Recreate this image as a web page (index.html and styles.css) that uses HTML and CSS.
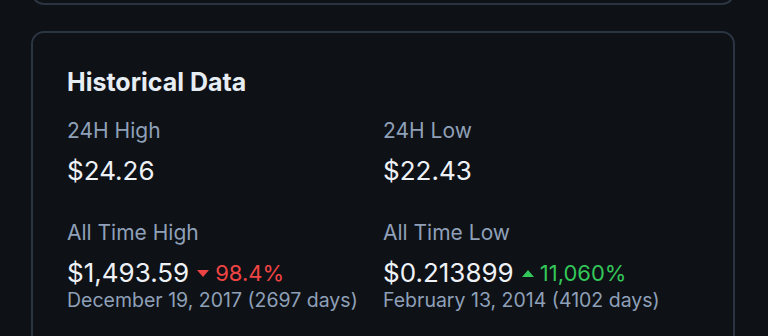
FILE: index.html
```html
<!DOCTYPE html>
<html lang="en">
<head>
    <meta charset="UTF-8">
    <meta name="viewport" content="width=device-width, initial-scale=1.0">
    <title>Historical Data</title>
    <link rel="stylesheet" href="styles.css">
</head>
<body>
    <div class="card card-prev"></div>

    <div class="card">
        <h2>Historical Data</h2>
        <div class="stats">
            <div class="stat">
                <p class="label">24H High</p>
                <p class="value">$24.26</p>
            </div>
            <div class="stat">
                <p class="label">24H Low</p>
                <p class="value">$22.43</p>
            </div>
            <div class="stat">
                <p class="label">All Time High</p>
                <p class="value">$1,493.59 <span class="change down"><span class="tri"></span>98.4%</span></p>
                <p class="date">December 19, 2017 (2697 days)</p>
            </div>
            <div class="stat">
                <p class="label">All Time Low</p>
                <p class="value">$0.213899 <span class="change up"><span class="tri"></span>11,060%</span></p>
                <p class="date">February 13, 2014 (4102 days)</p>
            </div>
        </div>
    </div>
</body>
</html>
```

FILE: styles.css
```css
/* Reset */
* {
    box-sizing: border-box;
    margin: 0;
    padding: 0;
    font-family: 'Inter', 'Noto Sans', sans-serif;
}

body {
    background-color: #0e1116;
    color: #e6edf3;
    display: flow-root;
    padding: 0 33px 0 31px;
    overflow: hidden;
}

/* Cards */
.card {
    border: 2px solid #2b3542;
    border-radius: 13px;
    padding: 34px 34px 40px;
}

.card-prev {
    height: 40px;
    padding: 0;
    margin-top: -35px;
    margin-bottom: 26px;
}

.card h2 {
    font-size: 25px;
    font-weight: 700;
    line-height: 30px;
    margin-bottom: 21px;
}

/* Stats grid */
.stats {
    display: grid;
    grid-template-columns: 1fr 1fr;
    row-gap: 34px;
}

.label {
    font-size: 21px;
    line-height: 26px;
    color: #8fa0b8;
    margin-bottom: 12px;
}

.value {
    font-size: 26px;
    line-height: 30px;
    color: #eef2f6;
    display: flex;
    align-items: center;
    gap: 8px;
}

.date {
    font-size: 19.5px;
    line-height: 24px;
    color: #8fa0b8;
}

/* Change badge */
.change {
    display: inline-flex;
    align-items: center;
    gap: 6px;
    font-size: 22px;
}

.change.down {
    color: #ef4444;
}

.change.up {
    color: #34c759;
}

.tri {
    width: 0;
    height: 0;
    border-left: 6.5px solid transparent;
    border-right: 6.5px solid transparent;
}

.down .tri {
    border-top: 7px solid #ef4444;
}

.up .tri {
    border-bottom: 7px solid #34c759;
}
```
